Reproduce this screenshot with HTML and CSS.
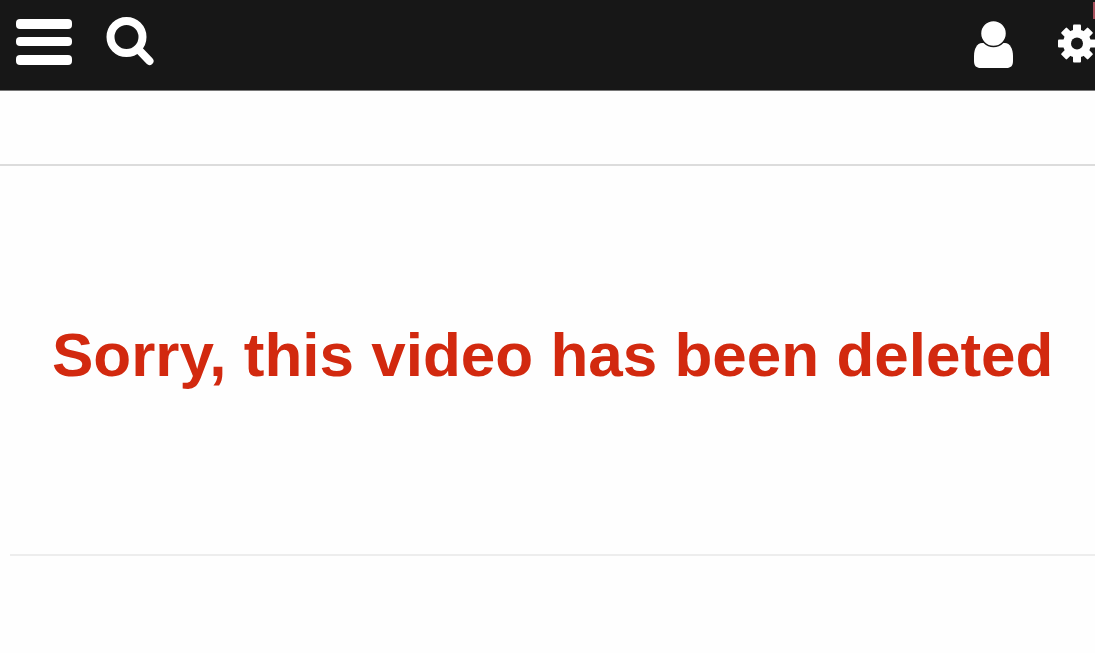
FILE: index.html
```html
<!DOCTYPE html>
<html lang="en">
  <head>
    <meta charset="UTF-8" />
    <meta name="viewport" content="width=device-width, initial-scale=1.0" />
    <title>Video deleted</title>
    <link rel="stylesheet" href="styles.css">
  </head>
  <body>
    <header class="topbar">
      <div class="topbar-left">
        <button type="button" class="icon-btn" aria-label="Menu">
          <svg width="56" height="48" viewBox="0 0 56 48" fill="#fff">
            <rect x="0" y="1" width="56" height="10" rx="4" />
            <rect x="0" y="19" width="56" height="9" rx="4" />
            <rect x="0" y="37" width="56" height="10" rx="4" />
          </svg>
        </button>
        <button type="button" class="icon-btn" aria-label="Search">
          <svg width="48" height="50" viewBox="0 0 48 50" fill="none" stroke="#fff">
            <circle cx="20.500" cy="20" r="16" stroke-width="8" />
            <path d="M33 33L43.500 44" stroke-width="8" stroke-linecap="round" />
          </svg>
        </button>
      </div>
      <div class="topbar-right">
        <button type="button" class="icon-btn" aria-label="Account">
          <svg width="40" height="48" viewBox="0 0 40 48" fill="#fff">
            <path d="M8 22H31C36 22 39 28 39 35V40C39 45 36.500 47 32.500 47H6.500C2.500 47 0 45 0 40V35C0 28 3 22 8 22Z" />
            <circle cx="19.500" cy="12.500" r="13" stroke="#171717" stroke-width="1.500" />
          </svg>
        </button>
        <button type="button" class="icon-btn" aria-label="Settings">
          <svg width="37" height="42" viewBox="0 0 37 42" fill="#fff">
            <g id="teeth">
              <path d="M15 7V1.500Q15 0.500 16 0.500H22Q23 0.500 23 1.500V7V32V37.500Q23 38.500 22 38.500H16Q15 38.500 15 37.500V32Z" />
            </g>
            <use href="#teeth" transform="rotate(45 19 19.500)" />
            <use href="#teeth" transform="rotate(90 19 19.500)" />
            <use href="#teeth" transform="rotate(135 19 19.500)" />
            <circle cx="19" cy="19.500" r="14" />
            <circle cx="19" cy="19.500" r="6" fill="#171717" />
          </svg>
          <span class="badge"></span>
        </button>
      </div>
    </header>
    <div class="subbar"></div>
    <main class="message">
      <h1>Sorry, this video has been deleted</h1>
    </main>
  </body>
</html>
```
FILE: styles.css
```css
body {
  margin: 0;
  background-color: #fefefe;
  font-family: "Liberation Sans", Arial, sans-serif;
}
.topbar {
  display: flex;
  justify-content: space-between;
  align-items: center;
  height: 90px;
  padding-left: 16px;
  background-color: #171717;
  border-bottom: 1px solid #777;
  overflow: hidden;
  position: relative;
}
.topbar-left {
  display: flex;
  align-items: center;
  gap: 34px;
  padding-bottom: 7px;
}
.topbar-right {
  display: flex;
  align-items: center;
  gap: 44px;
}
.icon-btn {
  display: flex;
  padding: 0;
  border: none;
  background: none;
  cursor: pointer;
}
/* notification mark on the edge of the bar */
.badge {
  position: absolute;
  top: 2px;
  right: 0;
  width: 2px;
  height: 17px;
  background-color: #a8505c;
}
.subbar {
  height: 73px;
  border-bottom: 2px solid #dcdcdc;
}
.message {
  margin-left: 10px;
  padding: 151px 0 161px;
  border-bottom: 2px solid #ededed;
}
.message h1 {
  margin: 0;
  padding-left: 42px;
  font-size: 62px;
  line-height: 76px;
  white-space: nowrap;
  color: #d2290f;
}
```
